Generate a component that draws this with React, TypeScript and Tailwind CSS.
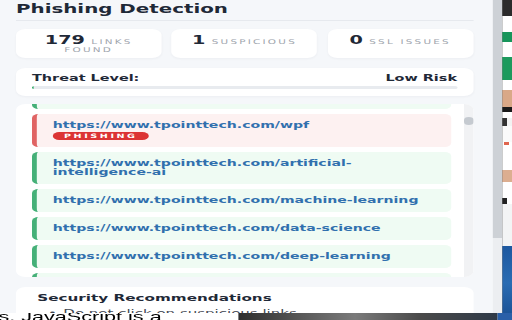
import clsx from 'clsx';

const links = [
  { url: 'https://www.tpointtech.com/python-tutorial', phishing: false },
  { url: 'https://www.tpointtech.com/wpf', phishing: true },
  { url: 'https://www.tpointtech.com/artificial-intelligence-ai', phishing: false },
  { url: 'https://www.tpointtech.com/machine-learning', phishing: false },
  { url: 'https://www.tpointtech.com/data-science', phishing: false },
  { url: 'https://www.tpointtech.com/deep-learning', phishing: false },
  { url: 'https://www.tpointtech.com/computer-network', phishing: false },
  { url: 'https://www.tpointtech.com/dbms-tutorial', phishing: false },
];

const stats = [
  { value: '179', label: 'Links found' },
  { value: '1', label: 'Suspicious' },
  { value: '0', label: 'SSL issues' },
];

const tips = [
  'Do not click on suspicious links',
  'Check the address bar before logging in',
  'Keep your browser up to date',
];

// strip of the page that sits behind the popup, top to bottom
const pageEdge = [
  { h: 'h-[16px]', bg: 'bg-[#2b2b2b]' },
  { h: 'h-[16px]', bg: 'bg-white' },
  { h: 'h-[10px]', bg: 'bg-[#17955a]' },
  { h: 'h-[15px]', bg: 'bg-white' },
  { h: 'h-[23px]', bg: 'bg-[#1c9a5d]' },
  { h: 'h-[10px]', bg: 'bg-white' },
  { h: 'h-[17px]', bg: 'bg-[#d9a887]' },
  { h: 'h-[5px]', bg: 'bg-[#1a1a1a]' },
  { h: 'h-[6px]', bg: 'bg-white' },
  { h: 'h-[8px]', bg: 'bg-[linear-gradient(90deg,#333_45%,#f3f3f3_45%)]' },
  { h: 'h-[16px]', bg: 'bg-[#fafafa]' },
  { h: 'h-[3px]', bg: 'bg-[linear-gradient(90deg,#fff_20%,#e0664f_20%,#e0664f_70%,#fff_70%)]' },
  { h: 'h-[25px]', bg: 'bg-white' },
  { h: 'h-[12px]', bg: 'bg-[#dcae90]' },
  { h: 'h-[16px]', bg: 'bg-white' },
  { h: 'h-[6px]', bg: 'bg-[linear-gradient(90deg,#222_50%,#fff_50%)]' },
  { h: 'h-[42px]', bg: 'bg-[#f3f4f5]' },
  { h: 'h-[67px]', bg: 'bg-[linear-gradient(180deg,#1d58a0,#2a6cb3_55%,#1c5498)]' },
];

function StatCard({ value, label }: { value: string; label: string }) {
  return (
    <div className="bg-white rounded-[6px] pt-[8px] pb-[4px] px-[4px] text-center text-[6.5px] leading-[7.5px] tracking-[1.4px] uppercase text-[#a0a5ad] shadow-[0_1px_2px_rgba(15,23,42,0.04)]">
      <span className="mr-[4px] text-[12px] leading-[7.5px] font-bold tracking-normal text-[#1f2937]">{value}</span>
      {label}
    </div>
  );
}

function LinkItem({ url, phishing }: { url: string; phishing: boolean }) {
  return (
    <div
      className={clsx(
        'flex flex-col items-start rounded-[4px] border-l-[3px] pl-[10px] pr-[6px] py-[7px]',
        phishing ? 'bg-[#fdf1f1] border-[#e06464]' : 'bg-[#effbf3] border-[#45b078]'
      )}
    >
      <div className="text-[8.8px] leading-[9px] font-bold text-[#3170ae]">{url}</div>
      {phishing && (
        <div className="mt-[1.5px] h-[8px] flex items-center rounded-full bg-[#dc3434] px-[7px] text-[6px] font-bold tracking-[1.6px] text-white">
          PHISHING
        </div>
      )}
    </div>
  );
}

function Popup() {
  const total = 179;
  const suspicious = 1;

  return (
    <div className="w-[314.4px] h-full flex">
      <div className="w-[308px] h-full overflow-hidden bg-[#f5f7fa] pl-[10px] pr-[12.4px]">
        <h1 className="pt-[1px] pb-[3px] border-b border-[#e6e9ee] text-[12.4px] leading-[16px] font-bold text-[#1f2937]">
          Phishing Detection
        </h1>

        <div className="mt-[8px] grid grid-cols-3 gap-[6.4px]">
          {stats.map((s) => (
            <StatCard key={s.label} value={s.value} label={s.label} />
          ))}
        </div>

        {/* Threat level */}
        <div className="mt-[10px] bg-white rounded-[6px] px-[10px] pt-[4px] pb-[7px] shadow-[0_1px_2px_rgba(15,23,42,0.04)]">
          <div className="flex justify-between text-[9px] leading-[12px] font-bold text-[#1f2937]">
            <span>Threat Level:</span>
            <span>Low Risk</span>
          </div>
          <div className="mt-[2px] h-[3px] rounded-full bg-[#e8ebef] overflow-hidden">
            <div className="h-full rounded-full bg-[#22a559]" style={{ width: `${(suspicious / total) * 100}%` }} />
          </div>
        </div>

        {/* Links, scrolled a little */}
        <div className="mt-[8px] h-[173px] flex bg-white rounded-[6px] overflow-hidden">
          <div className="flex-1 overflow-hidden pl-[10px] pr-[8px]">
            <div className="-mt-[18px] flex flex-col gap-[5px]">
              {links.map((l) => (
                <LinkItem key={l.url} url={l.url} phishing={l.phishing} />
              ))}
            </div>
          </div>
          <div className="w-[5.6px] bg-[#f1f2f4] pt-[13px]">
            <div className="h-[8px] rounded-full bg-[#c5cad0]" />
          </div>
        </div>

        {/* Recommendations */}
        <div className="mt-[10px] bg-white rounded-[6px] pl-[13.3px] pt-[4.5px] pb-[10px]">
          <h2 className="text-[9.5px] leading-[12px] font-bold text-[#1f2937]">Security Recommendations</h2>
          <ul className="mt-[3px] text-[9.4px] leading-[12px] text-[#3f4651]">
            {tips.map((t) => (
              <li key={t} className="flex">
                <span className="ml-[6.7px] w-[9.6px]">•</span>
                <span>{t}</span>
              </li>
            ))}
          </ul>
        </div>
      </div>

      {/* popup scrollbar + frame edge */}
      <div className="w-[5.6px] h-full flex flex-col">
        <div className="h-[238px] bg-[#cdd1d6]" />
        <div className="flex-1 bg-[#eceef1]" />
      </div>
      <div className="w-[0.8px] h-full bg-[#3b3b3b]" />
    </div>
  );
}

export default function App() {
  return (
    <div className="w-[512px] h-[320px] overflow-hidden bg-white">
      <div className="w-[320px] h-[320px] origin-top-left scale-x-[1.6] flex flex-col font-['DejaVu_Sans',sans-serif]">
        <div className="h-[313px] flex">
          <Popup />
          <div className="flex-1 flex flex-col">
            {pageEdge.map((b, i) => (
              <div key={i} className={clsx(b.h, b.bg)} />
            ))}
          </div>
        </div>

        {/* page below the popup */}
        <div className="h-[7px] flex overflow-hidden">
          <div className="w-[148.75px] bg-white overflow-hidden">
            <div className="-mt-[3px] -ml-[1px] whitespace-nowrap text-[13.5px] leading-[13px] text-black font-['Liberation_Sans',Arial,sans-serif]">
              s. JavaScript is a
            </div>
          </div>
          <div className="w-[161.9px] bg-[linear-gradient(90deg,#2e2e2e,#5a5a5a_25%,#7a7a7a_45%,#4a4a4a_70%,#2f3a48)]" />
          <div className="flex-1 bg-[#2a5fa8]" />
        </div>
      </div>
    </div>
  );
}
